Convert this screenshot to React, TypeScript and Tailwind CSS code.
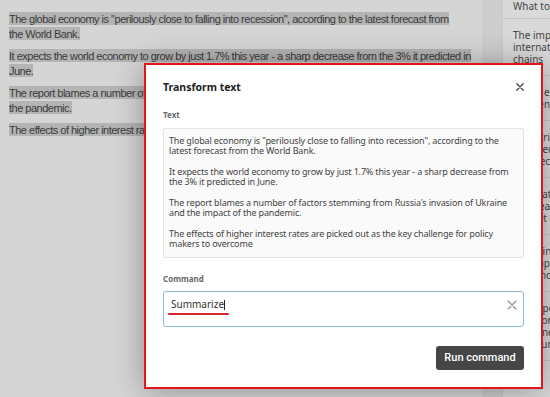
import React from "react";

const cards: string[][] = [
  ["The impact on", "international supply", "chains"],
  ["Rising energy costs", "and sentiment"],
  ["Industrial output", "in the eurozone", "and decline"],
  ["Debt rates", "to threaten", "budget cuts"],
  ["Spending slows", "as people", "save money"],
  ["The report", "for poorer", "set to need", "long-running"],
];

function CloseIcon({ className, stroke, width }: { className: string; stroke: string; width: number }) {
  return (
    <svg viewBox="0 0 10 10" className={className} fill="none" stroke={stroke} strokeWidth={width} strokeLinecap="round">
      <path d="M1 1 L9 9 M9 1 L1 9" />
    </svg>
  );
}

export default function App() {
  return (
    <div className="relative w-[550px] h-[397px] overflow-hidden bg-[#d5d5d5] flex">
      <main className="w-[482px] shrink-0 pl-[9px] pt-[11px] font-['Liberation_Sans',Arial,sans-serif] text-[11px] leading-[15px] text-[#3a3a3a] tracking-[-0.5px] whitespace-nowrap">
        <p className="mb-[7px]">
          <span className="bg-[#b4b4b4] py-[0.5px]">
            The global economy is "perilously close to falling into recession", according to the latest forecast from
            <br />
            the World Bank.
          </span>
        </p>
        <p className="mb-[7px]">
          <span className="bg-[#b4b4b4] py-[0.5px]">
            It expects the world economy to grow by just 1.7% this year - a sharp decrease from the 3% it predicted in
            <br />
            June.
          </span>
        </p>
        <p className="mb-[7px]">
          <span className="bg-[#b4b4b4] py-[0.5px]">
            The report blames a number of factors stemming from Russia's invasion of Ukraine and the impact of
            <br />
            the pandemic.
          </span>
        </p>
        <p className="mb-[7px]">
          <span className="bg-[#b4b4b4] py-[0.5px]">
            The effects of higher interest rates are picked out as the key challenge for policy makers to overcome
          </span>
        </p>
      </main>
      <div className="w-[20px] shrink-0 bg-[#cdcdcd]" />
      <aside className="flex-1 bg-[#d9d9d9] border-l border-[#cacaca] font-['Noto_Sans',sans-serif] text-[10px] leading-[12px] text-[#454545] whitespace-nowrap overflow-hidden">
        <div className="h-[19px] pl-[10px] border-b border-[#c6c6c6]">What to watch</div>
        {cards.map((lines, i) => (
          <div key={i} className="pl-[10px] py-[10px] border-b border-[#c6c6c6]">
            {lines.map((l, j) => (
              <div key={j}>{l}</div>
            ))}
          </div>
        ))}
      </aside>

      <div className="absolute left-[144px] top-[63px] w-[399px] h-[326px] bg-white border-2 border-[#e3141c] shadow-[0_2px_30px_rgba(0,0,0,0.32)] px-[17px] flex flex-col font-['Noto_Sans',sans-serif]">
        <div className="flex items-center justify-between mt-[15px] h-[14px]">
          <span className="text-[10.5px] leading-[14px] font-bold text-[#222]">Transform text</span>
          <CloseIcon className="w-[8px] h-[8px]" stroke="#444" width={1.6} />
        </div>
        <div className="mt-[16px] text-[8px] leading-[10px] font-bold text-[#6a6a6a]">Text</div>
        <div className="mt-[8px] h-[130px] bg-[#fafafa] border border-[#e3e3e3] rounded-[2px] pl-[5px] pt-[7px] text-[9px] leading-[10.3px] tracking-[-0.16px] text-[#444] whitespace-pre">
          {`The global economy is "perilously close to falling into recession", according to the
latest forecast from the World Bank.

It expects the world economy to grow by just 1.7% this year - a sharp decrease from
the 3% it predicted in June.

The report blames a number of factors stemming from Russia's invasion of Ukraine
and the impact of the pandemic.

The effects of higher interest rates are picked out as the key challenge for policy
makers to overcome`}
        </div>
        <div className="mt-[16px] text-[8px] leading-[10px] font-bold text-[#6a6a6a]">Command</div>
        <div className="relative mt-[7px] h-[36px] border border-[#8cbbdd] rounded-[3px] flex items-start justify-between pl-[7px] pr-[6px] pt-[6px]">
          <span className="flex items-center text-[10px] leading-[13px] text-[#333]">
            Summarize
            <span className="inline-block w-px h-[10px] bg-[#222]" />
          </span>
          <CloseIcon className="w-[10px] h-[10px] mt-[2px]" stroke="#8a8a8a" width={1.1} />
          <div className="absolute left-[4px] top-[21px] w-[61px] h-[2px] bg-[#d9232a] rounded-full" />
        </div>
        <div className="mt-[19px] flex justify-end">
          <button className="w-[88px] h-[24px] rounded-[3px] bg-[#464646] text-white font-['Roboto',sans-serif] font-medium text-[11px]">
            Run command
          </button>
        </div>
      </div>
    </div>
  );
}
